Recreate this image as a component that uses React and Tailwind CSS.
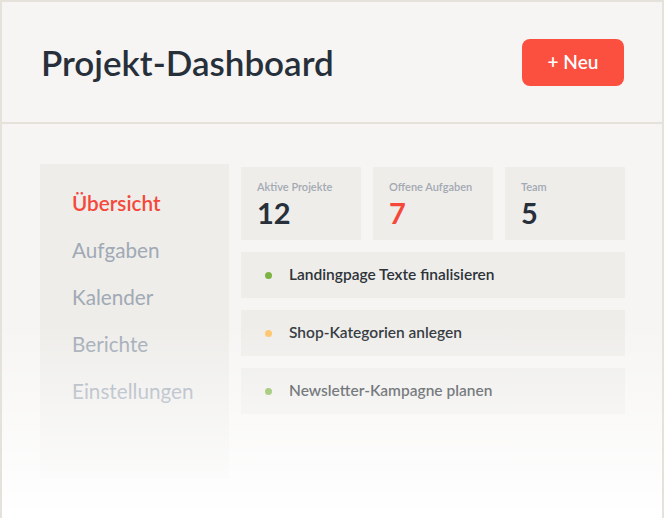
import React from "react";

const font = { fontFamily: "Lato, 'Noto Sans', sans-serif" };

const navItems = [
  { label: "Übersicht", active: true },
  { label: "Aufgaben" },
  { label: "Kalender" },
  { label: "Berichte" },
  { label: "Einstellungen" },
];

const stats = [
  { label: "Aktive Projekte", value: "12", accent: false },
  { label: "Offene Aufgaben", value: "7", accent: true },
  { label: "Team", value: "5", accent: false },
];

const tasks = [
  { title: "Landingpage Texte finalisieren", dot: "bg-[#7cb342]" },
  { title: "Shop-Kategorien anlegen", dot: "bg-[#ffc46b]" },
  { title: "Newsletter-Kampagne planen", dot: "bg-[#7cb342]" },
];

const StatCard = ({ label, value, accent }) => (
  <div className="w-[120px] h-[73px] bg-[#eeedea] pl-4 pt-[13px]">
    <p className="text-[11px] font-semibold leading-[14px] text-[#a3a9b2]">{label}</p>
    <p
      className={`mt-[3px] text-[29px] font-bold leading-[32px] ${
        accent ? "text-[#f5483a]" : "text-[#27303a]"
      }`}
    >
      {value}
    </p>
  </div>
);

const TaskRow = ({ title, dot }) => (
  <div className="h-[46px] bg-[#eeedea] flex items-center pl-6">
    <span className={`w-[7px] h-[7px] rounded-full ${dot}`} />
    <span className="ml-[17px] text-[15.5px] font-semibold text-[#2d3339]">{title}</span>
  </div>
);

export default function App() {
  return (
    <div
      className="relative w-[664px] h-[518px] overflow-hidden border-2 border-b-0 border-[#e4e2db] bg-[#f6f5f3]"
      style={font}
    >
      <header className="h-[122px] flex items-center justify-between pl-[39px] pr-[38px] border-b-2 border-[#e4e2db]">
        <h1 className="text-[35px] font-semibold text-[#27303a]">Projekt-Dashboard</h1>
        <button className="w-[102px] h-[47px] rounded-lg bg-[#fb4f3f] text-white text-[19px] font-semibold">
          + Neu
        </button>
      </header>

      <main className="flex gap-3 pt-10 pl-[38px]">
        <nav className="w-[189px] h-[314px] bg-[#eeedea] pl-8 pt-[24px] flex flex-col gap-[17px]">
          {navItems.map((item) => (
            <span
              key={item.label}
              className={`text-[20.7px] leading-[30px] ${
                item.active ? "font-semibold text-[#f5483a]" : "text-[#a0a9b5]"
              }`}
            >
              {item.label}
            </span>
          ))}
        </nav>

        <section className="w-[384px] mt-[3px] flex flex-col gap-3">
          <div className="flex gap-3">
            {stats.map((s) => (
              <StatCard key={s.label} {...s} />
            ))}
          </div>
          {tasks.map((t) => (
            <TaskRow key={t.title} {...t} />
          ))}
        </section>
      </main>

      <div className="pointer-events-none absolute inset-x-0 bottom-0 h-[195px] bg-linear-to-b from-[#ffffff00] to-[#ffffff]" />
    </div>
  );
}
